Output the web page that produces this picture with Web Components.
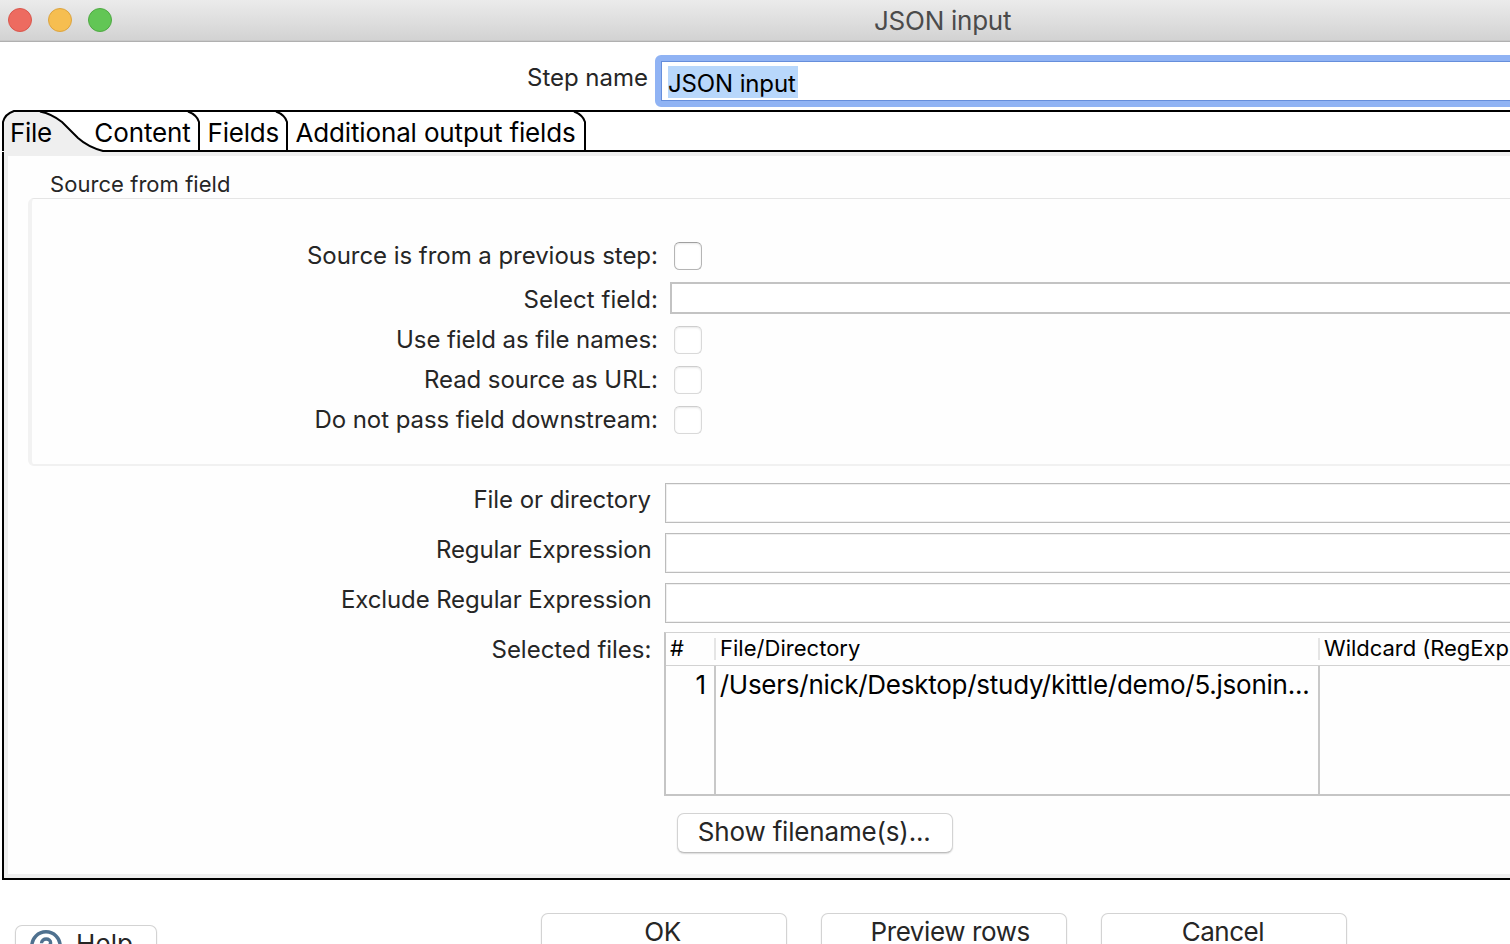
<!DOCTYPE html>
<html lang="en">
<head>
<meta charset="utf-8">
<title>JSON input</title>
<style>
html,body{margin:0;width:1510px;height:944px;overflow:hidden;background:#fff;font-family:Inter,"Liberation Sans",sans-serif;color:#262626}
</style>
</head>
<body>
<json-input-dialog></json-input-dialog>
<script>
const define = (name, html, setup) => {
  const t = document.createElement('template');
  t.innerHTML = html;
  customElements.define(name, class extends HTMLElement {
    connectedCallback() {
      if (this.shadowRoot) return;
      this.attachShadow({mode: 'open'}).append(t.content.cloneNode(true));
      if (setup) setup(this, this.shadowRoot);
    }
  });
};

/* Text tracked so that its visible glyphs span `w` pixels; `base` is the baseline's distance from the box top. */
const ctx = document.createElement('canvas').getContext('2d');
define('ui-text', `<style>
  :host{display:block;flex:none;white-space:nowrap}
  span{display:block;width:max-content}
</style><span></span>`, (el, root) => {
  const size = +el.getAttribute('size') || 24, w = +el.getAttribute('w'), base = +el.getAttribute('base');
  const text = el.getAttribute('text'), span = root.querySelector('span');
  span.textContent = text;
  ctx.font = size + 'px Inter, "Liberation Sans", sans-serif';
  const m = ctx.measureText(text);
  const ink = m.actualBoundingBoxLeft + m.actualBoundingBoxRight;
  el.style.width = w + 'px';
  el.style.fontSize = size + 'px';
  el.style.height = el.style.lineHeight = 2 * Math.round(base - 0.364 * size) + 'px';
  if (text.length > 1) span.style.letterSpacing = ((w - ink) / (text.length - 1)).toFixed(3) + 'px';
  span.style.marginLeft = m.actualBoundingBoxLeft + 'px';
});

define('title-bar', `<style>
  :host{display:flex;height:42px;box-sizing:border-box;border-bottom:1px solid #b0b0b0;box-shadow:inset 0 -1px #c9c9c9;background:linear-gradient(#ebebeb,#d2d2d2);padding-left:8px;color:#4b4b4b}
  i{box-sizing:border-box;width:24px;height:24px;border-radius:50%;margin:8px 16px 0 0;border:1px solid}
  .r{background:#ed6b60;border-color:#d9574d}.y{background:#f6be50;border-color:#dca440}.g{background:#62c655;border-color:#4fa943}
  ui-text{margin:6px 0 0 747px}
</style><i class="r"></i><i class="y"></i><i class="g"></i><ui-text text="JSON input" size="26" w="136" base="24"></ui-text>`);

define('step-name', `<style>
  :host{display:flex;height:68px;padding-left:528px}
  .l{margin-top:20px}
  .ring{flex:none;margin:13px 0 0 8px;width:900px;height:40px;border:6px solid #90b3f4;border-radius:6px}
  .box{box-sizing:border-box;height:40px;border:1px solid #668edb;background:#fff;padding:4px 0 0 6px}
  .sel{background:#b8d7fb;width:130px;height:32px;padding-left:1px;box-sizing:border-box;color:#000}
</style><ui-text class="l" text="Step name" w="119" base="25"></ui-text>
<div class="ring"><div class="box"><div class="sel"><ui-text text="JSON input" w="127" base="27"></ui-text></div></div></div>`);

define('tab-strip', `<style>
  :host{display:grid;height:42px;color:#000}
  svg,.t{grid-area:1/1}
  .t{display:flex;padding:8px 0 0 12px}
</style>
<svg width="1510" height="42" viewBox="0 110 1510 42" fill="none" stroke="#000" stroke-width="2">
  <path d="M3 152V122Q5 114 14 111H42Q52 113 62 122L78 139Q88 147 103 151V152Z" fill="#efefef" stroke="none"/>
  <path d="M3 151V122Q5 114 14 111H1510M40 111.5Q52 114 62 122L78 138Q88 147 103 151H1510M188 111.5Q197 115 199 122V151M276 111.5Q285 115 287 122V151M574 111.5Q583 115 585 122V151"/>
</svg>
<div class="t"><ui-text text="File" size="26" w="39" base="24"></ui-text>
<ui-text style="margin-left:44.3px" text="Content" size="26" w="95" base="24"></ui-text>
<ui-text style="margin-left:19.2px" text="Fields" size="26" w="69" base="24"></ui-text>
<ui-text style="margin-left:17px" text="Additional output fields" size="26" w="279.5" base="24"></ui-text></div>`);

define('form-row', `<style>
  :host{display:flex;align-items:flex-start}
  .l{display:flex;justify-content:flex-end;flex:none;width:var(--label)}
</style><div class="l"></div><slot></slot>`, (el, root) => {
  const t = document.createElement('ui-text');
  for (const a of ['text', 'w', 'base']) t.setAttribute(a, el.getAttribute(a));
  root.querySelector('.l').append(t);
});

define('check-box', `<style>
  :host{display:block;flex:none;box-sizing:border-box;width:28px;height:28px;margin-left:17px;border:1px solid #b5b5b5;border-top-color:#a0a0a0;border-radius:5.5px;background:#fff;box-shadow:inset 0 1px 2px #00000018}
  :host([disabled]){border-color:#d9d9d9;border-top-color:#cecece}
</style>`);

define('text-field', `<style>
  :host{display:block;flex:none;box-sizing:border-box;width:900px;height:40px;margin-left:14px;border:1px solid #bcbcbc;background:#fff;box-shadow:inset 0 0 0 1px #f0f0f0}
  :host([combo]){height:32px;border:2px solid #c3c3c3;box-shadow:none;margin-left:13px}
</style>`);

define('source-group', `<style>
  :host{display:block;padding:14px 0 0 20px;--label:625px}
  .title{margin-left:23px}
  .box{box-sizing:border-box;width:1600px;height:268px;border:1px solid #e5e5e5;border-left:4px solid #f2f2f2;border-bottom:2px solid #f1f1f1;border-radius:6px;padding-top:43px}
  form-row{height:40px}
  .first{height:40px}.combo{height:44px}
</style>
<ui-text class="title" text="Source from field" size="22" w="178" base="22"></ui-text>
<div class="box">
  <form-row class="first" text="Source is from a previous step:" w="349" base="23"><check-box></check-box></form-row>
  <form-row class="combo" text="Select field:" w="132.5" base="27"><text-field combo></text-field></form-row>
  <form-row text="Use field as file names:" w="259" base="23"><check-box disabled></check-box></form-row>
  <form-row text="Read source as URL:" w="231" base="23"><check-box disabled></check-box></form-row>
  <form-row text="Do not pass field downstream:" w="340.5" base="23"><check-box disabled></check-box></form-row>
</div>`);

define('file-table', `<style>
  :host{display:block;box-sizing:border-box;width:900px;height:164px;flex:none;margin-left:13.5px;border:solid #c5c5c5;border-width:1px 0 2px 2px;border-top-color:#d2d2d2;color:#000}
  .row{display:grid;grid-template-columns:50px 604px 1fr}
  .h{height:32px;border-bottom:1px solid #d2d2d2}
  .h div{box-sizing:border-box;height:22px;margin-top:5px;border-right:2px solid #e5e5e5}
  .b div{box-sizing:border-box;height:128px;border-right:2px solid #c8c8c8}
  .h ui-text{margin-top:-4px}
</style>
<div class="row h"><div><ui-text style="margin-left:4px" text="#" size="22" w="13" base="22"></ui-text></div><div><ui-text style="margin-left:5px" text="File/Directory" size="22" w="139" base="22"></ui-text></div><div><ui-text style="margin-left:4px" text="Wildcard (RegExp" size="22" w="184.5" base="22"></ui-text></div></div>
<div class="row b"><div><ui-text style="margin-left:30.5px" text="1" size="26" w="10" base="28"></ui-text></div><div><ui-text style="margin-left:3.7px" text="/Users/nick/Desktop/study/kittle/demo/5.jsonin..." size="26" w="588.5" base="28"></ui-text></div><div></div></div>`);

define('push-button', `<style>
  :host{display:flex;justify-content:center;flex:none;box-sizing:border-box;width:246px;height:40px;border:1px solid #d3d3d3;border-bottom-color:#bdbdbd;border-radius:7px;background:#fff;box-shadow:0 1px 1.5px #00000024}
</style><slot></slot>`);

define('file-panel', `<style>
  :host{display:block;box-sizing:border-box;width:1600px;height:728px;margin-left:2px;border:solid #000;border-width:0 0 2px 2px;background:#efefef;padding:4px 0 4px 4px}
  .in{height:718px;background:#fefefe;--label:642.5px}
  .rows{padding-top:17px;display:flex;flex-direction:column;gap:10px}
  form-row{height:40px}
  form-row.t{height:164px;margin-top:-1px}
  .show{width:276px;margin:17px 0 0 669px}
  .show ui-text{margin-right:2px}
</style><div class="in"><source-group></source-group>
<div class="rows">
  <form-row text="File or directory" w="175" base="26"><text-field></text-field></form-row>
  <form-row text="Regular Expression" w="212.5" base="26"><text-field></text-field></form-row>
  <form-row text="Exclude Regular Expression" w="307.5" base="26"><text-field></text-field></form-row>
  <form-row class="t" text="Selected files:" w="158" base="27"><file-table></file-table></form-row>
</div>
<push-button class="show"><ui-text text="Show filename(s)..." size="26" w="230.5" base="27"></ui-text></push-button></div>`);

define('button-bar', `<style>
  :host{display:flex;align-items:flex-start;height:64px;overflow:hidden;padding-left:15px}
  push-button{margin:33px 34px 0 0}
  push-button ui-text{margin-right:2px}
  .help{width:142px;margin:45px 384px 0 0;justify-content:flex-start;padding-left:14px}
  svg{flex:none;margin-top:4px}
  .help ui-text{margin:0 0 0 16px}
  .wide ui-text{margin:0 0 0 14px}
</style>
<push-button class="help"><svg width="32" height="32" viewBox="0 0 32 32" fill="none" stroke="#4f718f"><circle cx="16" cy="16" r="14.2" stroke-width="3.4"/><path d="M11.5 13.2C11.7 7.5 20.8 7.7 20.6 13C20.5 16 16 16.2 16 19.5M16 22V25" stroke-width="3.4"/></svg><ui-text text="Help" size="26" w="54" base="27"></ui-text></push-button>
<push-button><ui-text text="OK" size="26" w="35.5" base="27"></ui-text></push-button>
<push-button class="wide"><ui-text text="Preview rows" size="26" w="157" base="27"></ui-text></push-button>
<push-button><ui-text text="Cancel" size="26" w="80.5" base="27"></ui-text></push-button>`);

define('json-input-dialog', `<style>
  :host{display:flex;flex-direction:column;width:1510px;height:944px;overflow:hidden;background:#fff}
  title-bar,step-name,tab-strip,file-panel,button-bar{flex:none}
</style><title-bar></title-bar><step-name></step-name><tab-strip></tab-strip><file-panel></file-panel><button-bar></button-bar>`);
</script>
</body>
</html>
